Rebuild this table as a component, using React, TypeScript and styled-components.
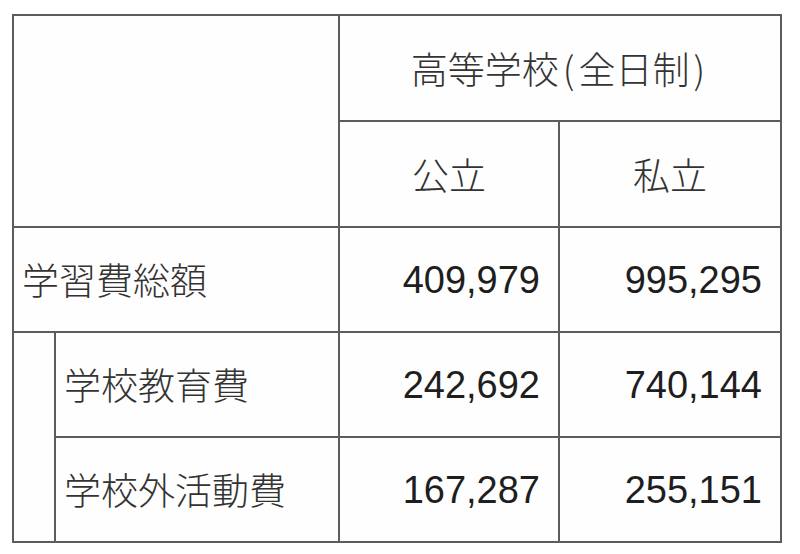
import { Fragment } from "react";
import styled, { createGlobalStyle } from "styled-components";

const GlobalStyle = createGlobalStyle`
  html, body {
    margin: 0;
    padding: 0;
    background: #ffffff;
  }
  body {
    font-family: "Noto Sans CJK JP", "Liberation Sans", sans-serif;
  }
`;

const Page = styled.div`
  width: 800px;
  height: 554px;
  padding: 14px 0 0 12px;
  box-sizing: border-box;
  background: #ffffff;
`;

const Table = styled.div`
  display: grid;
  grid-template-columns: 40px 282px 218px 220px;
  grid-template-rows: 104px 104px 103px 103px 103px;
  gap: 2px;
  padding: 2px;
  width: max-content;
  background: #5c5c5c;
`;

const Cell = styled.div<{ $col: string; $row: string; $align?: "left" | "center" | "right" }>`
  grid-column: ${(p) => p.$col};
  grid-row: ${(p) => p.$row};
  background: #fefefe;
  display: flex;
  align-items: center;
  justify-content: ${(p) =>
    p.$align === "right" ? "flex-end" : p.$align === "center" ? "center" : "flex-start"};
  padding: ${(p) => (p.$align === "right" ? "0 18px 0 0" : p.$align === "left" ? "0 0 0 8px" : "0")};
  color: #2a2a2a;
  font-size: 37px;
  line-height: 1;
`;

const Label = styled.span`
  font-family: "Noto Sans CJK JP", sans-serif;
  font-weight: 300;
  color: #333333;
`;

const Paren = styled.span`
  margin: 0 4px;
`;

const Num = styled.span`
  font-family: "Liberation Sans", Arial, sans-serif;
  font-size: 38px;
  color: #1e1e1e;
`;

const rows = [
  { label: "学校教育費", pub: "242,692", pri: "740,144" },
  { label: "学校外活動費", pub: "167,287", pri: "255,151" },
];

export default function App() {
  return (
    <Page>
      <GlobalStyle />
      <Table>
        <Cell $col="1 / 3" $row="1 / 3" />
        <Cell $col="3 / 5" $row="1" $align="center">
          <Label>
            高等学校<Paren>(</Paren>全日制<Paren>)</Paren>
          </Label>
        </Cell>
        <Cell $col="3" $row="2" $align="center">
          <Label>公立</Label>
        </Cell>
        <Cell $col="4" $row="2" $align="center">
          <Label>私立</Label>
        </Cell>

        <Cell $col="1 / 3" $row="3" $align="left">
          <Label>学習費総額</Label>
        </Cell>
        <Cell $col="3" $row="3" $align="right">
          <Num>409,979</Num>
        </Cell>
        <Cell $col="4" $row="3" $align="right">
          <Num>995,295</Num>
        </Cell>

        <Cell $col="1" $row="4 / 6" />
        {rows.map((r, i) => (
          <Fragment key={r.label}>
            <Cell $col="2" $row={`${i + 4}`} $align="left">
              <Label>{r.label}</Label>
            </Cell>
            <Cell $col="3" $row={`${i + 4}`} $align="right">
              <Num>{r.pub}</Num>
            </Cell>
            <Cell $col="4" $row={`${i + 4}`} $align="right">
              <Num>{r.pri}</Num>
            </Cell>
          </Fragment>
        ))}
      </Table>
    </Page>
  );
}
